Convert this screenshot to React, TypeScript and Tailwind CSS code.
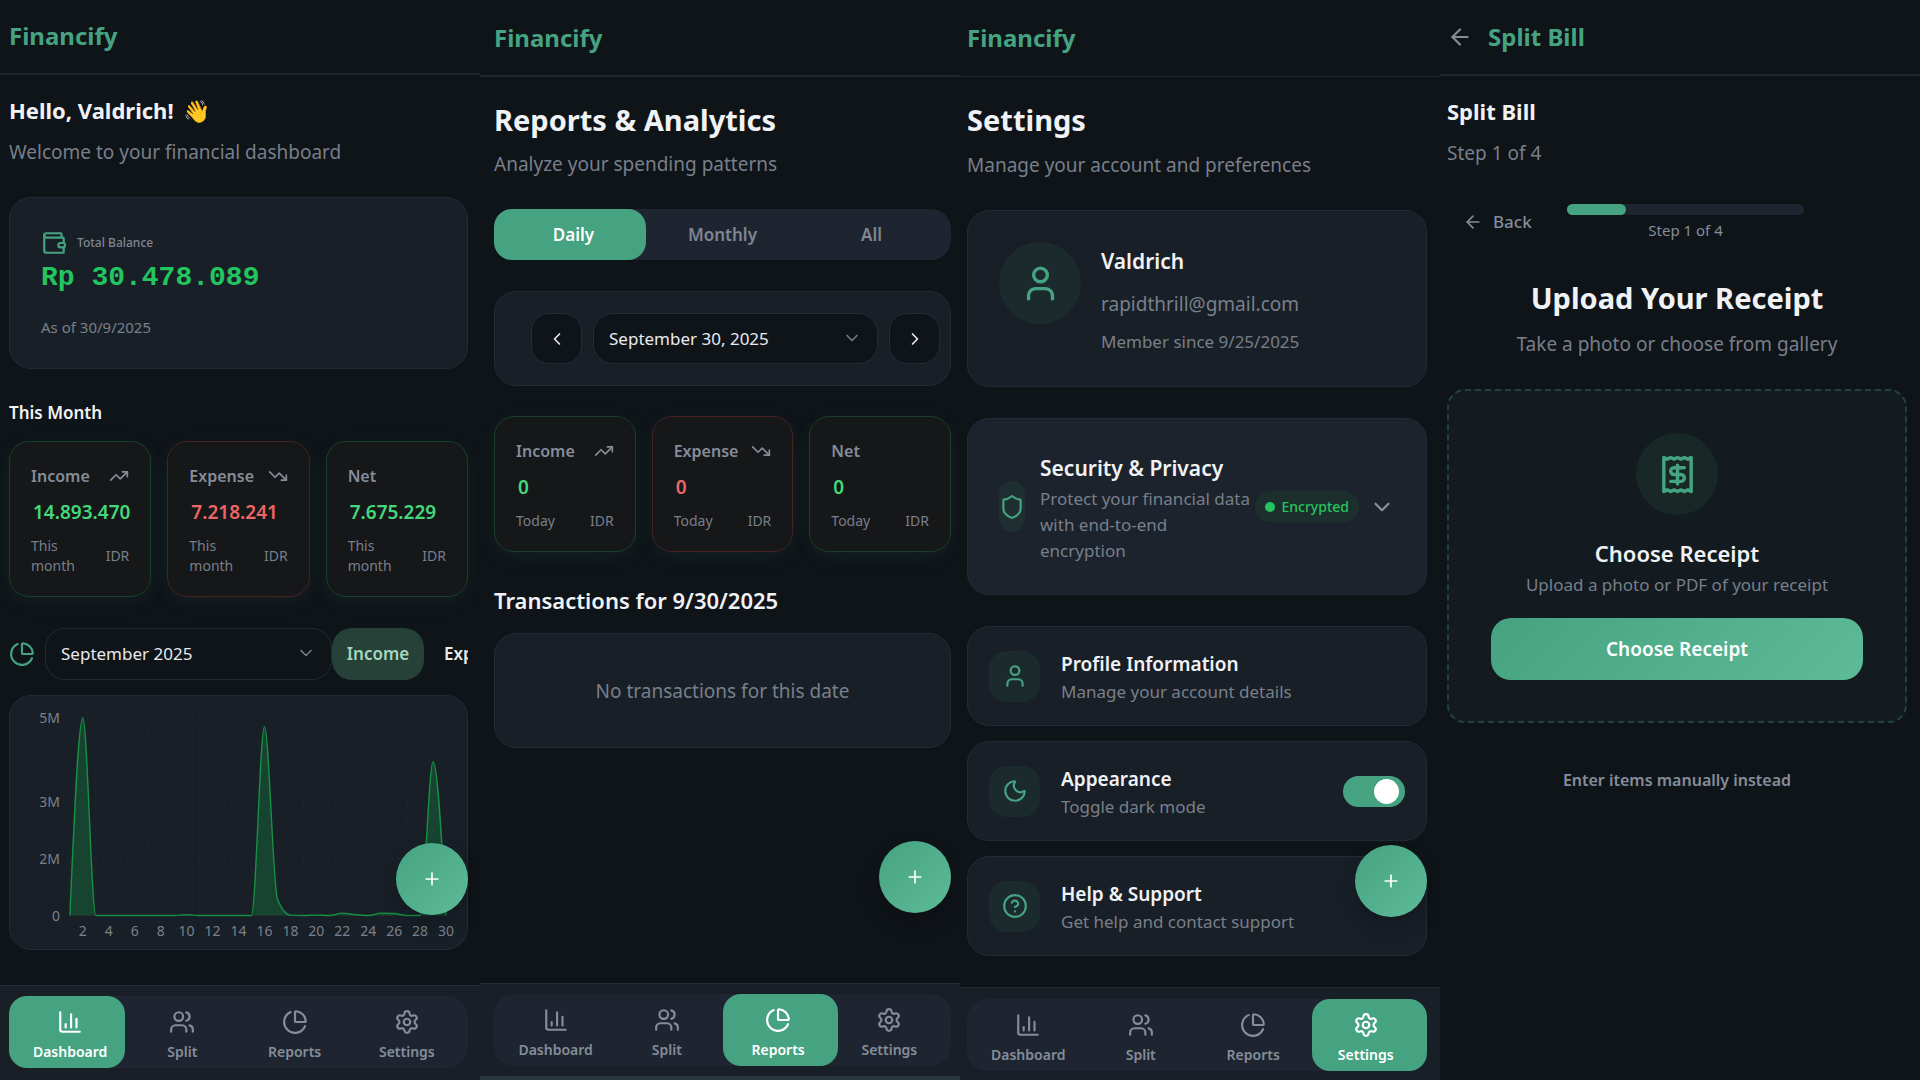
import type { ReactNode } from "react";
import {
  ArrowLeft,
  ChartColumn,
  ChartPie,
  ChevronDown,
  ChevronLeft,
  ChevronRight,
  CircleQuestionMark,
  Moon,
  Plus,
  Settings,
  Shield,
  TrendingDown,
  TrendingUp,
  User,
  Users,
  Wallet,
} from "lucide-react";

type TabName = "Dashboard" | "Split" | "Reports" | "Settings";

const NAV_TABS = [
  { name: "Dashboard", icon: ChartColumn },
  { name: "Split", icon: Users },
  { name: "Reports", icon: ChartPie },
  { name: "Settings", icon: Settings },
] as const;

function Header({ title, className, back }: { title: string; className: string; back?: boolean }) {
  return (
    <header className={`flex items-center gap-[15px] border-[#1f2830] ${className}`}>
      {back && (
        <button type="button" aria-label="Go back" className="text-[#868d98]">
          <ArrowLeft size={26} />
        </button>
      )}
      <span className="text-[24px] leading-8 font-bold text-[#45a381]">{title}</span>
    </header>
  );
}

function BottomNav({
  active,
  className,
  barClass,
  highlightClass,
  fabClass,
}: {
  active: TabName;
  className: string;
  barClass: string;
  highlightClass: string;
  fabClass: string;
}) {
  return (
    <nav className={`relative bg-[#181f27] ${className}`}>
      <button
        type="button"
        aria-label="Add transaction"
        className={`absolute -top-[143px] flex size-[72px] items-center justify-center rounded-full bg-linear-135 from-[#45a381] to-[#5dbb98] text-white shadow-[0_10px_20px_rgba(0,0,0,0.2)] ${fabClass}`}
      >
        <Plus size={20} />
      </button>
      <div className={`grid grid-cols-4 rounded-[20px] bg-[#1e2530] ${barClass}`}>
        {NAV_TABS.map(({ name, icon: Icon }) => (
          <button
            key={name}
            type="button"
            className={`relative h-[72px] ${name === active ? "text-white" : "text-[#858d99]"}`}
          >
            {name === active && (
              <span className={`absolute inset-y-0 rounded-[18px] bg-[#45a381] ${highlightClass}`} />
            )}
            <span className="relative flex flex-col items-center gap-[7px] pt-[7px]">
              <Icon size={26} />
              <span className="text-[14px] leading-5 font-semibold">{name}</span>
            </span>
          </button>
        ))}
      </div>
    </nav>
  );
}

function StatCard({
  label,
  value,
  period,
  icon,
  negative,
}: {
  label: string;
  value: string;
  period: string;
  icon?: ReactNode;
  negative?: boolean;
}) {
  return (
    <div
      className={`rounded-[20px] border bg-[#161719] px-[21px] pt-[21px] pb-5 shadow-[0_5px_20px_rgba(69,163,129,0.08)] ${
        negative ? "border-[#492224]" : "border-[#173f29]"
      }`}
    >
      <div className="flex items-center justify-between text-[#858d99]">
        <span className="text-[16px] leading-[26px] font-semibold">{label}</span>
        {icon}
      </div>
      <p
        className={`mt-2 pl-0.5 text-[19px] leading-[30px] font-semibold whitespace-nowrap ${
          negative ? "text-[#ec6665]" : "text-[#43d97b]"
        }`}
      >
        {value}
      </p>
      <div className="mt-[9px] flex items-center justify-between gap-4 text-[14px] leading-5 text-[#787f8a]">
        <span>{period}</span>
        <span>IDR</span>
      </div>
    </div>
  );
}

function StatCards({ income, expense, net, period }: { income: string; expense: string; net: string; period: string }) {
  return (
    <div className="grid grid-cols-3 gap-4">
      <StatCard label="Income" value={income} period={period} icon={<TrendingUp size={20} />} />
      <StatCard label="Expense" value={expense} period={period} icon={<TrendingDown size={20} />} negative />
      <StatCard label="Net" value={net} period={period} />
    </div>
  );
}

function DropDown({ label, value, className }: { label: string; value: string; className: string }) {
  return (
    <div className={`relative ${className}`}>
      <select
        aria-label={label}
        className="size-full appearance-none rounded-[20px] border border-[#232b35] bg-[#0f1419] pr-10 pl-[15px] text-[17px] text-[#e8eaed]"
      >
        <option>{value}</option>
      </select>
      <ChevronDown size={20} className="pointer-events-none absolute top-[15px] right-4 text-[#767c86]" />
    </div>
  );
}

/* Income per day of the month, in millions. */
const DAILY_INCOME = [
  0, 5, 0, 0, 0, 0, 0, 0, 0, 0.02, 0, 0, 0, 0, 0, 4.78, 0.42, 0.01, 0, 0.01, 0, 0.06, 0.02, 0, 0.06, 0.05, 0, 0, 3.89, 0,
];

const PLOT = { left: 60, right: 437, top: 22, bottom: 220, max: 5 };

const xOf = (day: number) => PLOT.left + ((day - 1) * (PLOT.right - PLOT.left)) / 29;
const yOf = (v: number) => PLOT.bottom - (v * (PLOT.bottom - PLOT.top)) / PLOT.max;

/* Monotone cubic interpolation, so that the curve never dips below zero. */
function monotonePath(values: number[]) {
  const pts = values.map((v, i) => [xOf(i + 1), yOf(v)]);
  const slope = (i: number) => (pts[i + 1][1] - pts[i][1]) / (pts[i + 1][0] - pts[i][0]);
  const tangent = pts.map((_, i) => {
    if (i === 0 || i === pts.length - 1) return NaN;
    const a = slope(i - 1);
    const b = slope(i);
    return (Math.sign(a) + Math.sign(b)) * Math.min(Math.abs(a), Math.abs(b), Math.abs(a + b) / 4) || 0;
  });
  tangent[0] = (3 * slope(0) - tangent[1]) / 2;
  tangent[pts.length - 1] = (3 * slope(pts.length - 2) - tangent[pts.length - 2]) / 2;
  let d = `M${pts[0][0]},${pts[0][1]}`;
  for (let i = 0; i < pts.length - 1; i++) {
    const [x0, y0] = pts[i];
    const [x1, y1] = pts[i + 1];
    const dx = (x1 - x0) / 3;
    d += `C${x0 + dx},${y0 + dx * tangent[i]} ${x1 - dx},${y1 - dx * tangent[i + 1]} ${x1},${y1}`;
  }
  return d;
}

function IncomeChart() {
  const line = monotonePath(DAILY_INCOME);
  const gridDays = [1, 3, 5, 7, 9, 11, 13, 15, 17, 19, 21, 23, 25, 27, 29, 30];
  const labels = Array.from({ length: 15 }, (_, i) => 2 * i + 2);
  const ticks = [
    { y: 22, text: "5M" },
    { y: 106, text: "3M" },
    { y: 163, text: "2M" },
    { y: 220, text: "0" },
  ];
  return (
    <svg viewBox="0 0 458 254" className="block w-full" role="img" aria-label="Income in September 2025">
      <g stroke="#1f2831" strokeDasharray="4 4">
        {gridDays.map((d) => (
          <line key={d} x1={xOf(d)} x2={xOf(d)} y1={PLOT.top} y2={PLOT.bottom} />
        ))}
        {ticks.map((t) => (
          <line key={t.text} x1={PLOT.left} x2={PLOT.right} y1={t.y} y2={t.y} />
        ))}
      </g>
      <path d={`${line}L${PLOT.right},${PLOT.bottom}L${PLOT.left},${PLOT.bottom}Z`} fill="#16a34a" fillOpacity="0.28" />
      <path d={line} fill="none" stroke="#178f44" strokeWidth="1.4" />
      <g fill="#7b828d" fontSize="14">
        {ticks.map((t) => (
          <text key={t.text} x="50" y={t.y + 5} textAnchor="end">
            {t.text}
          </text>
        ))}
        {labels.map((d) => (
          <text key={d} x={xOf(d)} y="241" textAnchor="middle">
            {d}
          </text>
        ))}
      </g>
    </svg>
  );
}

function Dashboard() {
  return (
    <section className="flex min-h-screen flex-col overflow-hidden">
      <Header title="Financify" className="h-[75px] border-b-2 px-[9px] pb-0.5" />
      <main className="flex-1 pt-[19px] pr-3 pl-[9px]">
        <h1 className="text-[22px] leading-8 font-bold text-[#f0f2f5]">
          Hello, Valdrich! <span className="ml-1">👋</span>
        </h1>
        <p className="mt-3 text-[19px] leading-7 text-[#787f8a]">Welcome to your financial dashboard</p>

        <div className="mt-[31px] rounded-[22px] border border-[#222c36] bg-[#181f27] px-[31px] pt-8 pb-[31px]">
          <div className="flex items-center gap-[10px]">
            <Wallet size={26} className="text-[#45a381]" />
            <span className="text-[12px] leading-5 font-medium text-[#7f8691]">Total Balance</span>
          </div>
          <p className="mt-1 font-['Liberation_Mono'] text-[28px] leading-9 font-bold text-[#22c55e]">
            Rp 30.478.089
          </p>
          <p className="mt-[21px] text-[15px] leading-5 text-[#787f8a]">As of 30/9/2025</p>
        </div>

        <h2 className="mt-[31px] mb-[15px] text-[17px] leading-[26px] font-semibold text-[#f0f2f5]">This Month</h2>
        <StatCards income="14.893.470" expense="7.218.241" net="7.675.229" period="This month" />

        <div className="mt-[31px] flex h-[52px] items-center overflow-hidden">
          <ChartPie size={26} className="mr-[10px] shrink-0 text-[#45a381]" />
          <DropDown label="Month" value="September 2025" className="h-full w-[287px] shrink-0" />
          <button
            type="button"
            className="h-full w-[92px] shrink-0 rounded-[20px] bg-[#264137] text-[17px] font-semibold text-[#a5d6c0]"
          >
            Income
          </button>
          <button type="button" className="h-full shrink-0 px-5 text-[17px] font-semibold text-[#e8eaed]">
            Expense
          </button>
        </div>

        <div className="mt-[15px] rounded-[22px] border border-[#222c36] bg-[#181f27]">
          <IncomeChart />
        </div>
      </main>
      <BottomNav
        active="Dashboard"
        className="border-t border-[#242c36] pt-[10px] pr-3 pb-3 pl-[9px]"
        barClass="px-[5px]"
        highlightClass="-left-[5px] right-px"
        fabClass="right-3"
      />
    </section>
  );
}

function Reports() {
  const stepClass =
    "flex size-[51px] shrink-0 items-center justify-center rounded-[18px] border border-[#222c36] bg-[#0f1419] text-[#e8eaed]";
  return (
    <section className="flex min-h-screen flex-col overflow-hidden">
      <Header title="Financify" className="h-[77px] border-b-2 px-[14px]" />
      <main className="flex-1 pt-[23px] pr-[9px] pl-[14px]">
        <h1 className="text-[29px] leading-10 font-bold text-[#f0f2f5]">Reports &amp; Analytics</h1>
        <p className="mt-[10px] text-[19px] leading-7 text-[#787f8a]">Analyze your spending patterns</p>

        <div className="mt-[31px] grid h-[51px] grid-cols-3 rounded-[20px] bg-[#1e2530] px-[5px] text-[17px] font-semibold text-[#7f8691]">
          <button type="button" className="relative text-white">
            <span className="absolute inset-y-0 right-0.5 -left-[5px] rounded-[18px] bg-[#45a381]" />
            <span className="relative">Daily</span>
          </button>
          <button type="button">Monthly</button>
          <button type="button">All</button>
        </div>

        <div className="mt-[31px] flex items-center gap-[11px] rounded-[22px] border border-[#222c36] bg-[#181f27] py-[21px] pr-[10px] pl-9">
          <button type="button" aria-label="Previous day" className={stepClass}>
            <ChevronLeft size={20} />
          </button>
          <DropDown label="Day" value="September 30, 2025" className="h-[51px] flex-1" />
          <button type="button" aria-label="Next day" className={stepClass}>
            <ChevronRight size={20} />
          </button>
        </div>

        <div className="mt-[30px]">
          <StatCards income="0" expense="0" net="0" period="Today" />
        </div>

        <h2 className="mt-8 text-[22px] leading-8 font-semibold text-[#f0f2f5]">Transactions for 9/30/2025</h2>
        <div className="mt-[17px] rounded-[22px] border border-[#222c36] bg-[#181f27] pt-[43px] pb-[42px] text-center text-[19px] leading-7 text-[#787f8a]">
          No transactions for this date
        </div>
      </main>
      <BottomNav
        active="Reports"
        className="border-t border-b-4 border-t-[#242e36] border-b-[#2a373c] pt-[10px] pr-[9px] pb-[10px] pl-[14px]"
        barClass="px-[6px]"
        highlightClass="left-0 -right-1"
        fabClass="right-[9px]"
      />
    </section>
  );
}

function SettingRow({
  icon,
  title,
  text,
  children,
}: {
  icon: ReactNode;
  title: string;
  text: string;
  children?: ReactNode;
}) {
  return (
    <div className="flex h-[100px] items-center rounded-[22px] border border-[#222c36] bg-[#181f27] px-[21px]">
      <div className="flex size-[51px] items-center justify-center rounded-[18px] bg-[#1b2b2d] text-[#45a381]">
        {icon}
      </div>
      <div className="ml-[21px] flex-1 pt-0.5">
        <h3 className="text-[19px] leading-[30px] font-semibold text-[#f0f2f5]">{title}</h3>
        <p className="text-[17px] leading-[26px] text-[#787f8a]">{text}</p>
      </div>
      {children}
    </div>
  );
}

function SettingsScreen() {
  return (
    <section className="flex min-h-screen flex-col overflow-hidden">
      <Header title="Financify" className="h-[77px] border-b px-[7px]" />
      <main className="flex-1 pt-[23px] pr-[13px] pl-[7px]">
        <h1 className="text-[29px] leading-10 font-bold text-[#f0f2f5]">Settings</h1>
        <p className="mt-[11px] text-[19px] leading-7 text-[#787f8a]">Manage your account and preferences</p>

        <div className="mt-[31px] flex gap-5 rounded-[22px] border border-[#222c36] bg-[#181f27] p-[31px]">
          <div className="flex size-[82px] items-center justify-center rounded-full bg-[#1b2b2d] text-[#45a381]">
            <User size={41} />
          </div>
          <div className="pt-1">
            <h2 className="text-[21px] leading-[30px] font-semibold text-[#f0f2f5]">Valdrich</h2>
            <p className="mt-[14px] text-[19px] leading-7 text-[#787f8a]">rapidthrill@gmail.com</p>
            <p className="mt-[11px] text-[17px] leading-[26px] text-[#787f8a]">Member since 9/25/2025</p>
          </div>
        </div>

        <div className="mt-[31px] flex h-[177px] items-center rounded-[22px] border border-[#222c36] bg-[#1c232c] px-[31px]">
          <div className="flex h-[51px] w-[26px] shrink-0 items-center justify-center rounded-full bg-[#1f2e31] text-[#45a381]">
            <Shield size={26} />
          </div>
          <div className="mt-[3px] ml-[15px] flex-1">
            <h2 className="text-[21px] leading-8 font-semibold text-[#f0f2f5]">Security &amp; Privacy</h2>
            <p className="mt-0.5 text-[17px] leading-[26px] text-[#787f8a]">
              Protect your financial data
              <br />
              with end-to-end
              <br />
              encryption
            </p>
          </div>
          <div className="flex h-[31px] shrink-0 items-center gap-[6px] rounded-full bg-[#1c2f2d] px-[10px] text-[14px] font-medium text-[#22c55e]">
            <span className="size-[10px] rounded-full bg-[#22c55e]" />
            Encrypted
          </div>
          <button type="button" aria-label="Show security details" className="ml-[10px] text-[#8b919b]">
            <ChevronDown size={26} />
          </button>
        </div>

        <div className="mt-[31px] flex flex-col gap-[15px]">
          <SettingRow icon={<User size={26} />} title="Profile Information" text="Manage your account details" />
          <SettingRow icon={<Moon size={26} />} title="Appearance" text="Toggle dark mode">
            <input
              type="checkbox"
              role="switch"
              aria-label="Dark mode"
              defaultChecked
              className="relative h-[31px] w-[62px] appearance-none rounded-full bg-[#3a424d] before:absolute before:top-[3px] before:left-[5px] before:size-[25px] before:rounded-full before:bg-white checked:bg-[#45a381] checked:before:left-[31px]"
            />
          </SettingRow>
          <SettingRow
            icon={<CircleQuestionMark size={26} />}
            title="Help &amp; Support"
            text="Get help and contact support"
          />
        </div>
      </main>
      <BottomNav
        active="Settings"
        className="border-t border-[#242c36] pt-[11px] pr-[13px] pb-[9px] pl-[7px]"
        barClass="px-[5px]"
        highlightClass="left-0.5 -right-[5px]"
        fabClass="right-[13px]"
      />
    </section>
  );
}

function ReceiptIcon() {
  return (
    <svg
      viewBox="0 0 24 24"
      className="size-[41px]"
      fill="none"
      stroke="currentColor"
      strokeWidth="2"
      strokeLinecap="round"
      strokeLinejoin="round"
      aria-hidden="true"
    >
      <path d="M4 2v20l2-1 2 1 2-1 2 1 2-1 2 1 2-1 2 1V2l-2 1-2-1-2 1-2-1-2 1-2-1-2 1Z" />
      <path d="M16 8h-6a2 2 0 1 0 0 4h4a2 2 0 1 1 0 4H8" />
      <path d="M12 17.5v-11" />
    </svg>
  );
}

function SplitBill() {
  return (
    <section className="flex min-h-screen flex-col overflow-hidden">
      <Header title="Split Bill" className="h-[76px] border-b-2 px-[7px]" back />
      <main className="flex-1 pt-[19px] pr-[13px] pl-[7px]">
        <h1 className="text-[22px] leading-8 font-bold text-[#f0f2f5]">Split Bill</h1>
        <p className="mt-3 text-[19px] leading-7 text-[#787f8a]">Step 1 of 4</p>

        <div className="mt-[37px] flex items-center gap-5">
          <button
            type="button"
            className="flex w-[100px] items-center gap-[10px] pl-4 text-[17px] font-medium text-[#858d99]"
          >
            <ArrowLeft size={20} />
            Back
          </button>
          <div className="flex-1">
            <div
              role="progressbar"
              aria-label="Split bill progress"
              aria-valuemin={0}
              aria-valuemax={4}
              aria-valuenow={1}
              className="h-[11px] rounded-full bg-[#1e2530]"
            >
              <div className="h-full w-1/4 rounded-full bg-[#45a381]" />
            </div>
            <p className="mt-[5px] text-center text-[15px] leading-5 text-[#858d99]">Step 1 of 4</p>
          </div>
          <div className="w-[83px]" />
        </div>

        <div className="mt-[38px] text-center">
          <h2 className="text-[29px] leading-10 font-bold text-[#f0f2f5]">Upload Your Receipt</h2>
          <p className="mt-3 text-[19px] leading-7 text-[#787f8a]">Take a photo or choose from gallery</p>
        </div>

        <div className="mt-[31px] flex flex-col items-center rounded-[18px] border-2 border-dashed border-[#20443c] bg-[#131a20] px-[42px] pt-[42px] pb-[41px]">
          <div className="flex size-[82px] items-center justify-center rounded-full bg-[#182827] text-[#45a381]">
            <ReceiptIcon />
          </div>
          <h3 className="mt-[22px] text-[22px] leading-8 font-semibold text-[#f0f2f5]">Choose Receipt</h3>
          <p className="mt-[3px] text-[17px] leading-[26px] text-[#787f8a]">Upload a photo or PDF of your receipt</p>
          <button
            type="button"
            className="mt-5 h-[62px] w-full rounded-[20px] bg-linear-135 from-[#45a381] to-[#5dbb98] text-[19px] font-semibold text-white"
          >
            Choose Receipt
          </button>
        </div>

        <div className="mt-[44px] text-center">
          <button type="button" className="text-[16px] leading-[26px] font-semibold text-[#858d99]">
            Enter items manually instead
          </button>
        </div>
      </main>
    </section>
  );
}

export default function App() {
  return (
    <div className="grid min-h-screen grid-cols-4 bg-[#0f1419] font-['Noto_Sans',sans-serif]">
      <Dashboard />
      <Reports />
      <SettingsScreen />
      <SplitBill />
    </div>
  );
}
